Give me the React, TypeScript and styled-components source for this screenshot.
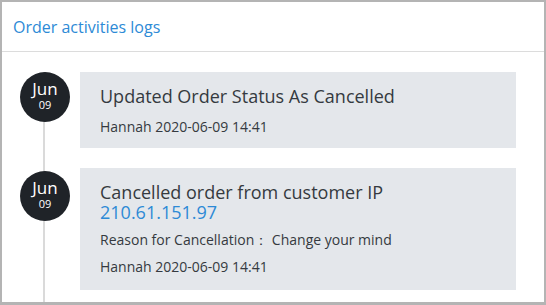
import React from "react";
import styled, { createGlobalStyle } from "styled-components";

const GlobalStyle = createGlobalStyle`
  html, body { margin: 0; padding: 0; background: #ffffff; }
  body { font-family: "Open Sans", "Liberation Sans", Arial, sans-serif; }
  * { box-sizing: border-box; }
`;

const Frame = styled.div`
  width: 546px;
  height: 305px;
  border: 2px solid #b4b4b4;
  border-bottom-width: 3px;
  background: #ffffff;
  overflow: hidden;
  display: flex;
  flex-direction: column;
`;

const Header = styled.div`
  height: 50px;
  flex: none;
  display: flex;
  align-items: flex-start;
  padding: 15px 11px 0;
  border-bottom: 1px solid #dcdcdc;
`;

const HeaderTitle = styled.h2`
  margin: 0;
  font-size: 16px;
  font-weight: 400;
  color: #2d8ad6;
  line-height: 20px;
`;

const List = styled.div`
  position: relative;
  flex: 1;
  display: flex;
  flex-direction: column;
  gap: 20px;
  padding: 20px 28px 0 18px;

  &::before {
    content: "";
    position: absolute;
    left: 41px;
    top: 20px;
    bottom: 0;
    width: 2px;
    background: #dadada;
  }
`;

const Item = styled.div`
  display: flex;
  align-items: flex-start;
  gap: 10px;
`;

const DateBadge = styled.div<{ $offset?: number }>`
  position: relative;
  z-index: 1;
  flex: none;
  width: 50px;
  height: 50px;
  margin-top: ${(p) => p.$offset ?? 0}px;
  border-radius: 50%;
  background: #1f2328;
  color: #ffffff;
  display: flex;
  flex-direction: column;
  align-items: center;
  justify-content: flex-start;
  padding-top: 8px;
`;

const Month = styled.span`
  font-size: 17px;
  line-height: 18px;
`;

const Day = styled.span`
  font-size: 11px;
  line-height: 13px;
`;

const Card = styled.div<{ $bottom?: number }>`
  flex: 1;
  background: #e4e7eb;
  padding: 14px 20px ${(p) => p.$bottom ?? 12}px;
  color: #353a40;
`;

const Title = styled.div`
  font-size: 18px;
  line-height: 20px;
`;

const Link = styled.div`
  font-size: 18px;
  line-height: 20px;
  color: #2d8ad6;
`;

const Meta = styled.div<{ $gap?: number }>`
  font-size: 14px;
  line-height: 20px;
  margin-top: ${(p) => p.$gap ?? 8}px;
`;

export default function App() {
  return (
    <>
      <GlobalStyle />
      <Frame>
        <Header>
          <HeaderTitle>Order activities logs</HeaderTitle>
        </Header>
        <List>
          <Item>
            <DateBadge>
              <Month>Jun</Month>
              <Day>09</Day>
            </DateBadge>
            <Card $bottom={11}>
              <Title>Updated Order Status As Cancelled</Title>
              <Meta $gap={11}>Hannah 2020-06-09 14:41</Meta>
            </Card>
          </Item>
          <Item>
            <DateBadge $offset={3}>
              <Month>Jun</Month>
              <Day>09</Day>
            </DateBadge>
            <Card $bottom={13}>
              <Title>Cancelled order from customer IP</Title>
              <Link>210.61.151.97</Link>
              <Meta>Reason for Cancellation： Change your mind</Meta>
              <Meta $gap={7}>Hannah 2020-06-09 14:41</Meta>
            </Card>
          </Item>
        </List>
      </Frame>
    </>
  );
}
